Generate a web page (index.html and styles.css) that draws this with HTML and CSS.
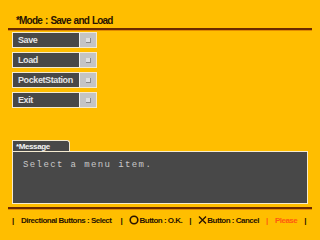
FILE: index.html
```html
<!DOCTYPE html>
<html lang="en">
<head>
    <meta charset="UTF-8">
    <meta name="viewport" content="width=device-width, initial-scale=1.0">
    <title>Save and Load</title>
    <link rel="stylesheet" href="styles.css">
</head>
<body>
    <div class="screen">
        <div class="title">*Mode : Save and Load</div>
        <div class="rule"></div>

        <ul class="menu">
            <li><span class="label">Save</span><span class="knob"><i></i></span></li>
            <li><span class="label">Load</span><span class="knob"><i></i></span></li>
            <li><span class="label">PocketStation</span><span class="knob"><i></i></span></li>
            <li><span class="label">Exit</span><span class="knob"><i></i></span></li>
        </ul>

        <!-- message window -->
        <div class="message">
            <div class="tab"><span>*Message</span></div>
            <div class="box">Select a menu item.</div>
        </div>

        <div class="rule low"></div>
        <div class="footer">
            <span class="bar">|</span>
            <span class="hint first">Directional Buttons : Select</span>
            <span class="bar">|</span>
            <span class="hint"><svg width="10" height="10" viewBox="0 0 10 10"><circle cx="5" cy="5" r="3.8" fill="none" stroke="#2a1400" stroke-width="1.6"/></svg>Button : O.K.</span>
            <span class="bar">|</span>
            <span class="hint"><svg width="9" height="10" viewBox="0 0 9 10"><path d="M1 1.5 L8 8.5 M8 1.5 L1 8.5" stroke="#2a1400" stroke-width="1.4"/></svg>Button : Cancel</span>
            <span class="bar warn">|</span>
            <span class="hint warn">Please</span>
            <span class="bar">|</span>
        </div>
    </div>
</body>
</html>
```
FILE: styles.css
```css
body {
    margin: 0;
    background-color: #ffbe00;
    font-family: "Liberation Sans", Arial, sans-serif;
    color: #2a1400;
}
.screen {
    width: 320px;
    height: 240px;
    overflow: hidden;
}
.title {
    padding: 15px 0 0 16px;
    height: 13px;
    line-height: 12px;
    font-size: 10px;
    font-weight: bold;
    letter-spacing: -0.8px;
    word-spacing: 1px;
}
.rule {
    margin: 0 8px;
    height: 2px;
    background-color: #6b2a00;
    border-bottom: 1px solid #e08a00;
}
.rule.low {
    margin-top: 3px;
}
.menu {
    list-style: none;
    margin: 1px 0 0 12px;
    padding: 0;
    display: flex;
    flex-direction: column;
    gap: 4px;
}
.menu li {
    width: 83px;
    height: 14px;
    border: 1px solid #f4ead0;
    display: flex;
}
.label {
    flex: 1;
    background-color: #484848;
    color: #e4e4e4;
    font-size: 9px;
    font-weight: bold;
    letter-spacing: -0.4px;
    line-height: 14px;
    padding-left: 5px;
}
.knob {
    width: 16px;
    background-color: #c4c4c4;
    border-left: 1px solid #f0f0f0;
    display: flex;
    align-items: center;
    justify-content: center;
}
.knob i {
    width: 4px;
    height: 4px;
    background-color: #e0e0e0;
    border-right: 1px solid #8a8a8a;
    border-bottom: 1px solid #8a8a8a;
}
.message {
    margin: 32px 0 0 12px;
}
.tab {
    width: 53px;
    height: 11px;
    background-color: #484848;
    border: 1px solid #f4ead0;
    border-bottom: none;
    border-top-right-radius: 3px;
    padding: 0 0 0 3px;
}
.tab span {
    display: block;
    width: 48px;
    height: 10px;
    border-bottom: 1px solid #9a9a9a;
    color: #f4f4f4;
    font-size: 8px;
    font-weight: bold;
    letter-spacing: -0.4px;
    line-height: 11px;
}
.box {
    width: 284px;
    height: 43px;
    margin-top: -1px;
    background-color: #484848;
    border: 1px solid #f4ead0;
    padding: 8px 0 0 10px;
    font-family: "Liberation Mono", monospace;
    font-size: 9px;
    letter-spacing: 1.4px;
    color: #c8c8c8;
}
.footer {
    display: flex;
    align-items: center;
    height: 20px;
    padding-left: 12px;
    font-size: 8px;
    font-weight: bold;
    letter-spacing: -0.5px;
}
.bar {
    width: 9px;
}
.hint {
    display: flex;
    align-items: center;
    margin-right: 7px;
}
.hint.first {
    margin-right: 9px;
}
.warn {
    color: #ff5a10;
}
```
